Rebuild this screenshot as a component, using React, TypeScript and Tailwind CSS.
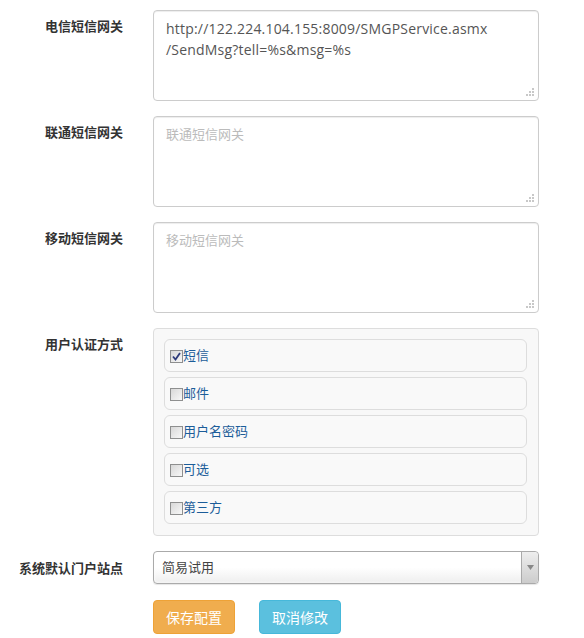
import React from 'react'

const cjk = "font-['Open_Sans','Noto_Sans_CJK_SC',sans-serif]"

const options = [
  { label: '短信', checked: true },
  { label: '邮件', checked: false },
  { label: '用户名密码', checked: false },
  { label: '可选', checked: false },
  { label: '第三方', checked: false },
]

function Grip() {
  return (
    <svg className="absolute right-[3px] bottom-[3px]" width="9" height="9" viewBox="0 0 9 9">
      {[[7, 1], [4, 4], [7, 4], [1, 7], [4, 7], [7, 7]].map(([x, y]) => (
        <rect key={`${x}-${y}`} x={x - 1} y={y - 1} width="2" height="2" fill="#c8c8c8" />
      ))}
    </svg>
  )
}

function Field({ label, children, top = 'pt-[7px]' }: { label: string; children: React.ReactNode; top?: string }) {
  return (
    <div className="flex">
      <div className={`w-[123px] shrink-0 text-right text-[13px] font-bold text-[#333] leading-[18px] ${top}`}>{label}</div>
      <div className="ml-[30px] w-[386px]">{children}</div>
    </div>
  )
}

function Area({ lines, placeholder }: { lines?: string[]; placeholder: string }) {
  return (
    <div className="relative h-[91px] rounded-[4px] border border-[#ccc] bg-white px-[12px] py-[7px] shadow-[inset_0_1px_1px_rgba(0,0,0,0.075)]">
      {lines ? (
        lines.map(l => <div key={l} className="text-[14px] leading-[21px] tracking-[0.2px] text-[#555]">{l}</div>)
      ) : (
        <div className="text-[13px] leading-[21px] text-[#bbb]">{placeholder}</div>
      )}
      <Grip />
    </div>
  )
}

function Box({ checked }: { checked: boolean }) {
  return (
    <span className="relative inline-flex h-[13px] w-[13px] shrink-0 items-center justify-center border border-[#8e8f8f] bg-gradient-to-br from-[#d8d8d8] to-[#f8f8f8]">
      {checked && (
        <svg width="9" height="9" viewBox="0 0 9 9">
          <path d="M1 4.5 L3.5 7.5 L8 1" fill="none" stroke="#2e3b7a" strokeWidth="1.8" />
        </svg>
      )}
    </span>
  )
}

export default function App() {
  return (
    <div className={`w-[584px] h-[638px] bg-white pt-[10px] ${cjk}`}>
      <div className="flex flex-col gap-[15px]">
        <Field label="电信短信网关">
          <Area lines={['http://122.224.104.155:8009/SMGPService.asmx', '/SendMsg?tell=%s&msg=%s']} placeholder="电信短信网关" />
        </Field>
        <Field label="联通短信网关">
          <Area placeholder="联通短信网关" />
        </Field>
        <Field label="移动短信网关">
          <Area placeholder="移动短信网关" />
        </Field>
        <Field label="用户认证方式">
          <div className="rounded-[4px] border border-[#ddd] bg-[#f8f8f8] pt-[10px] pb-[11px] pl-[10px] pr-[11px]">
            <div className="flex flex-col gap-[5px]">
              {options.map(o => (
                <div key={o.label} className="flex h-[33px] items-center rounded-[6px] border border-[#ddd] bg-[#f9f9f9] pl-[5px] pt-[1px]">
                  <Box checked={o.checked} />
                  <span className="text-[13px] text-[#1c5d99]">{o.label}</span>
                </div>
              ))}
            </div>
          </div>
        </Field>
        <Field label="系统默认门户站点" top="pt-[8px]">
          <div className="flex h-[33px] rounded-[4px] border border-[#aaa] bg-gradient-to-b from-white via-white to-[#eee] shadow-[0_0_3px_#fff_inset,0_1px_1px_rgba(0,0,0,0.1)]">
            <div className="flex-1 pl-[8px] text-[13px] leading-[31px] text-[#444]">简易试用</div>
            <div className="flex w-[17px] items-center justify-center rounded-r-[4px] border-l border-[#aaa] bg-gradient-to-b from-[#eee] to-[#ccc]">
              <svg width="7" height="5" viewBox="0 0 7 5"><path d="M0 0 H7 L3.5 5 Z" fill="#888" /></svg>
            </div>
          </div>
        </Field>
      </div>
      <div className="ml-[153px] mt-[16px] flex gap-[24px]">
        <button className="h-[34px] w-[82px] rounded-[4px] border border-[#eea236] bg-[#f0ad4e] text-[14px] text-white">保存配置</button>
        <button className="h-[34px] w-[82px] rounded-[4px] border border-[#46b8da] bg-[#5bc0de] text-[14px] text-white">取消修改</button>
      </div>
    </div>
  )
}
